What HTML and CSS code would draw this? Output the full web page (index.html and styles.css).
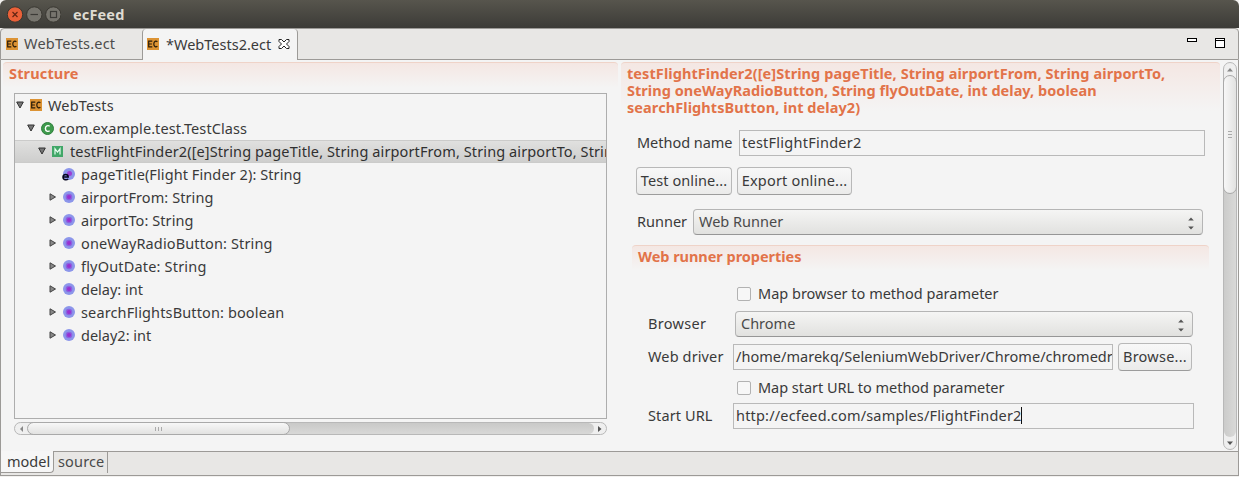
FILE: index.html
```html
<!DOCTYPE html>
<html lang="en">
<head>
<meta charset="utf-8">
<title>ecFeed</title>
<link rel="stylesheet" href="styles.css">
</head>
<body>
<svg width="0" height="0" class="defs">
  <symbol id="ec" viewBox="0 0 12 12"><rect width="12" height="12" fill="#dc9334"/><path d="M5.3 3.1H1.7V8.9H5.3M1.700 6H4.900M10.400 3.700C9 2.700 6.800 3 6.800 6S9 9.300 10.400 8.300" fill="none" stroke="#2a1c08" stroke-width="1.200"/></symbol>
  <symbol id="down" viewBox="0 0 8 8"><path d="M.7 1H7.300L4 7Z" fill="#777" stroke="#333"/></symbol>
  <symbol id="right" viewBox="0 0 8 8"><path d="M1 .8V7.200L6.500 4Z" fill="#888" stroke="#444"/></symbol>
  <symbol id="param" viewBox="0 0 12 12"><circle cx="6" cy="6" r="6" fill="#8c96ea"/><circle cx="6" cy="6" r="3.300" fill="#8c62e0"/><circle cx="6" cy="6" r="2" fill="#9b2fd0"/></symbol>
  <symbol id="updown" viewBox="0 0 8 14"><path d="M1.200 4.500H6.800L4 1.500ZM1.200 10.500H6.800L4 13.500Z" fill="#555"/></symbol>
</svg>
<div class="window">
  <header class="titlebar">
    <svg class="controls" width="54" height="18" viewBox="0 0 54 18">
      <circle cx="8" cy="8.500" r="7.700" fill="#ea6038" stroke="#393731"/><path d="M5.500 6L10.500 11M10.500 6L5.500 11" stroke="#642513" stroke-width="1.200"/>
      <circle cx="27.300" cy="8.500" r="7.700" fill="#77756e" stroke="#393731"/><path d="M23.500 8.500H31" stroke="#3c3b37" stroke-width="1.200"/>
      <circle cx="46.300" cy="8.500" r="7.700" fill="#77756e" stroke="#393731"/><rect x="43.500" y="5.500" width="6" height="6" fill="none" stroke="#3c3b37" stroke-width="1.200"/>
    </svg>
    <span class="ls15">ecFeed</span>
  </header>

  <nav class="tabs">
    <div class="tab"><svg class="i12"><use href="#ec"/></svg><span class="ls20">WebTests.ect</span></div>
    <div class="tab active"><svg class="i12"><use href="#ec"/></svg><span>*WebTests2.ect</span>
      <svg class="close" width="12" height="12" viewBox="0 0 12 12"><path d="M1 1.500H3.500L6 4L8.500 1.500H11V3.500L8.500 6L11 8.500V10.500H8.500L6 8L3.500 10.500H1V8.500L3.500 6L1 3.500Z" fill="#fff" stroke="#222"/></svg>
    </div>
    <div class="viewbtns">
      <svg width="10" height="4" viewBox="0 0 10 4"><rect x=".5" y=".5" width="9" height="3" fill="#fff" stroke="#000"/></svg>
      <svg width="10" height="10" viewBox="0 0 10 10"><rect x=".5" y=".5" width="9" height="9" fill="#fff" stroke="#000"/><path d="M1 2.500H9" stroke="#000"/></svg>
    </div>
  </nav>

  <main class="editor">
    <section class="structure">
      <h2 class="head ls15">Structure</h2>
      <div class="tree">
        <div class="row d0"><svg class="i8"><use href="#down"/></svg><svg class="i12"><use href="#ec"/></svg><span class="ls15">WebTests</span></div>
        <div class="row d1"><svg class="i8"><use href="#down"/></svg><svg class="i13" viewBox="0 0 13 13"><circle cx="6.500" cy="6.500" r="6" fill="#3e9a4c" stroke="#2f7f3d"/><path d="M8.700 4.200C7 3 4.400 3.800 4.400 6.500S7 10 8.700 8.800" fill="none" stroke="#fff" stroke-width="1.400"/></svg><span class="ls08">com.example.test.TestClass</span></div>
        <div class="row d2 selected"><svg class="i8"><use href="#down"/></svg><svg class="i11" viewBox="0 0 11 11"><rect width="11" height="11" fill="#41a768"/><path d="M3 8.500V2.800L5.500 6L8 2.800V8.500" fill="none" stroke="#e8fff0" stroke-width="1.200"/></svg><span class="ls11 clip">testFlightFinder2([e]String pageTitle, String airportFrom, String airportTo, String</span></div>
        <div class="row d3"><i class="i8"></i><svg class="i12 linked" viewBox="0 0 12 12"><circle cx="6" cy="6" r="6" fill="#8c96ea"/><circle cx="6.500" cy="5.500" r="2.500" fill="#9b3fd4"/><path d="M0 9H5.200C5.200 5.800 0 5.700 0 9C0 12.400 3.800 12.300 5.200 11" fill="none" stroke="#05051e" stroke-width="1.500"/></svg><span class="ls09">pageTitle(Flight Finder 2): String</span></div>
        <div class="row d3"><svg class="i8"><use href="#right"/></svg><svg class="i12"><use href="#param"/></svg><span class="ls09">airportFrom: String</span></div>
        <div class="row d3"><svg class="i8"><use href="#right"/></svg><svg class="i12"><use href="#param"/></svg><span class="ls09">airportTo: String</span></div>
        <div class="row d3"><svg class="i8"><use href="#right"/></svg><svg class="i12"><use href="#param"/></svg><span class="ls13">oneWayRadioButton: String</span></div>
        <div class="row d3"><svg class="i8"><use href="#right"/></svg><svg class="i12"><use href="#param"/></svg><span class="ls18">flyOutDate: String</span></div>
        <div class="row d3"><svg class="i8"><use href="#right"/></svg><svg class="i12"><use href="#param"/></svg><span>delay: int</span></div>
        <div class="row d3"><svg class="i8"><use href="#right"/></svg><svg class="i12"><use href="#param"/></svg><span class="ls13">searchFlightsButton: boolean</span></div>
        <div class="row d3"><svg class="i8"><use href="#right"/></svg><svg class="i12"><use href="#param"/></svg><span>delay2: int</span></div>
      </div>
      <div class="hscroll">
        <svg width="12" height="12" viewBox="0 0 12 12"><path d="M8 3V9L5 6Z" fill="#888"/></svg>
        <div class="hthumb"><i></i><i></i><i></i></div>
        <div class="htrack"></div>
        <svg width="12" height="12" viewBox="0 0 12 12"><path d="M4 3V9L7.500 6Z" fill="#555"/></svg>
      </div>
    </section>

    <section class="details">
      <h2 class="head method"><span class="ls08">testFlightFinder2([e]String pageTitle, String airportFrom, String airportTo,</span><br><span class="ls03">String oneWayRadioButton, String flyOutDate, int delay, boolean</span><br><span class="ls08">searchFlightsButton, int delay2)</span></h2>
      <div class="line name"><label class="tight">Method name</label><div class="field ls25">testFlightFinder2</div></div>
      <div class="line actions"><button>Test online...</button><button>Export online...</button></div>
      <div class="line runner"><label>Runner</label><div class="combo"><span>Web Runner</span><svg width="8" height="14"><use href="#updown"/></svg></div></div>
      <h3 class="head sub">Web runner properties</h3>
      <div class="line check"><i class="box"></i><span>Map browser to method parameter</span></div>
      <div class="line browser"><label class="ls30">Browser</label><div class="combo"><span>Chrome</span><svg width="8" height="14"><use href="#updown"/></svg></div></div>
      <div class="line driver"><label class="ls13">Web driver</label><div class="field"><span class="ls03">/home/marekq/SeleniumWebDriver/Chrome/chromedr</span></div><button>Browse...</button></div>
      <div class="line check second"><i class="box"></i><span class="tight">Map start URL to method parameter</span></div>
      <div class="line url"><label class="ls11">Start URL</label><div class="field ls18">http://ecfeed.com/samples/FlightFinder2<i class="caret"></i></div></div>
    </section>

    <div class="vscroll">
      <svg width="12" height="12" viewBox="0 0 12 12"><path d="M3 8.500H9L6 5Z" fill="#888"/></svg>
      <div class="vthumb"><i></i><i></i><i></i></div>
      <div class="vtrack"></div>
      <svg width="12" height="12" viewBox="0 0 12 12"><path d="M3 4.500H9L6 8Z" fill="#555"/></svg>
    </div>
  </main>

  <footer class="pages"><div class="page active">model</div><div class="page ls15">source</div></footer>
</div>
</body>
</html>
```
FILE: styles.css
```css
* { box-sizing: border-box; }
body { margin: 0; background: #f2f1ef; font: 14.5px/17px "Noto Sans", sans-serif; color: #3a3a3a; overflow: hidden; }
.defs { position: absolute; }
svg { display: block; flex: none; }
h2, h3 { margin: 0; font-size: 14.5px; line-height: 17px; }
.window { width: 1239px; height: 477px; display: flex; flex-direction: column; }

.ls03 { letter-spacing: .03px; }
.ls08 { letter-spacing: .08px; }
.ls09 { letter-spacing: .09px; }
.ls11 { letter-spacing: .11px; }
.ls13 { letter-spacing: .13px; }
.ls15 { letter-spacing: .15px; }
.ls18 { letter-spacing: .18px; }
.ls20 { letter-spacing: .2px; }
.ls25 { letter-spacing: .25px; }
.ls30 { letter-spacing: .32px; }
.tight { letter-spacing: -.03px; }

.i8 { width: 8px; height: 8px; flex: none; }
.i11 { width: 11px; height: 11px; }
.i12 { width: 12px; height: 12px; }
.i13 { width: 13px; height: 13px; }

.titlebar { height: 28px; flex: none; display: flex; align-items: center; gap: 12px; padding: 1px 0 0 7px; border-radius: 6px 6px 0 0; background: linear-gradient(#57554d, #3c3b37); color: #dfdbd2; font-weight: bold; }

.tabs { height: 32px; flex: none; display: flex; border: 1px solid #9c9a97; border-radius: 4px 4px 0 0; background: #e8e7e5; }
.tab { width: 141px; display: flex; align-items: center; padding: 0 0 1px 5px; gap: 6px; color: #4c4c4c; white-space: nowrap; }
.tab.active { width: 156px; height: 31px; background: #f4f4f4; border: solid #9c9a97; border-width: 0 1px; border-radius: 4px 4px 0 0; padding-left: 4px; gap: 7px; color: #3a3a3a; }
.tab.active .close { margin-left: 0; }
.viewbtns { margin-left: auto; display: flex; gap: 18px; padding: 9px 13px 0 0; }

.editor { flex: none; height: 391px; display: flex; background: #f4f4f4; border: solid #9c9a97; border-width: 0 1px; }
.head { color: #e27349; border-top: 1px solid #efd3c8; border-radius: 4px 4px 0 0; background: linear-gradient(#f4e7e3, #f4f4f4); white-space: nowrap; }

.structure { width: 620px; flex: none; padding: 2px 0 0 2px; }
.structure .head { width: 615px; height: 26px; padding: 2px 0 0 6px; }
.tree { width: 593px; height: 326px; margin: 5px 0 0 11px; border: 1px solid #adadad; overflow: hidden; }
.row { height: 23px; display: flex; align-items: center; white-space: nowrap; }
.row span { padding-bottom: 1px; }
.row .i8 { margin-bottom: 1px; }
.row .clip { flex: 1; min-width: 0; overflow: hidden; }
.d0 { padding-left: 1px; }
.d0 .i12 { margin: 0 6px 1px 6px; }
.d1 { padding-left: 12px; }
.d1 .i13 { margin: 0 5px 1px 6px; }
.d2 { padding-left: 23px; }
.d2 .i11 { margin: 0 7px 1px 6px; }
.d3 { padding-left: 34px; }
.d3 .i12 { margin: 0 6px 1px 6px; }
.linked { overflow: visible; }
.selected { background: linear-gradient(#e0e0df, #cececd); border: solid #cbcbca; border-width: 1px 0; color: #303030; }
.hscroll { width: 593px; height: 13px; margin: 3px 0 0 11px; display: flex; align-items: center; border: 1px solid #b8b8b8; border-radius: 7px; background: #efefef; }
.hthumb { width: 263px; height: 13px; flex: none; display: flex; gap: 2px; align-items: center; justify-content: center; border: 1px solid #a9a9a9; border-radius: 7px; background: linear-gradient(#f7f7f7, #e2e2e1); position: relative; z-index: 1; }
.hthumb i { width: 1px; height: 4px; background: #aaa; }
.htrack { flex: 1; height: 11px; margin-left: -6px; background: linear-gradient(#c9c9c8, #d8d8d7); border-radius: 0 6px 6px 0; }

.details { width: 602px; flex: none; padding-top: 2px; }
.method { width: 599px; height: 49px; padding: 2px 0 0 6px; }
.line { display: flex; align-items: center; white-space: nowrap; }
.line label, .check span { padding-bottom: 1px; }
.field { height: 26px; flex: none; display: flex; align-items: center; border: 1px solid #b9b9b9; padding: 0 0 1px 2px; overflow: hidden; background: #f4f4f4; }
.combo { height: 26px; flex: none; display: flex; align-items: center; justify-content: space-between; padding: 0 7px 1px 5px; border: 1px solid #b5b5b5; border-bottom-color: #969696; border-radius: 4px; background: linear-gradient(#f5f5f4, #e1e1df); color: #4a4a4a; }
.combo svg { margin-top: 3px; }
button { height: 28px; flex: none; padding: 0 0 1px; font: inherit; line-height: 17px; color: #3a3a3a; border: 1px solid #b8b8b8; border-bottom-color: #9c9c9c; border-radius: 4px; background: linear-gradient(#f8f8f8, #ebebea); }
.name { margin: 19px 0 0 16px; }
.name label { width: 102px; }
.name .field { width: 466px; }
.actions { gap: 5px; margin: 11px 0 0 15px; }
.actions button:first-child { width: 96px; letter-spacing: .09px; }
.actions button:last-child { width: 115px; letter-spacing: .2px; }
.runner { margin: 14px 0 0 16px; }
.runner label { width: 56px; }
.runner .combo { width: 510px; }
.sub { width: 577px; height: 25px; margin: 10px 0 0 11px; padding: 2px 0 0 6px; letter-spacing: -.04px; }
.check { height: 15px; margin: 16px 0 0 116px; gap: 7px; }
.box { width: 14px; height: 14px; border: 1px solid #b2b2b2; border-radius: 2px; background: #f7f7f7; }
.browser { margin: 10px 0 0 27px; }
.browser label { width: 87px; }
.browser .combo { width: 458px; }
.driver { margin: 6px 0 0 27px; }
.driver label { width: 85px; }
.driver .field { width: 380px; }
.driver button { width: 74px; margin-left: 5px; letter-spacing: .25px; }
.second { margin-top: 9px; }
.url { margin: 8px 0 0 27px; }
.url label { width: 85px; }
.url .field { width: 461px; }
.caret { width: 1px; height: 17px; margin-left: -1px; background: #111; }

.vscroll { width: 14px; margin: 2px 0 1px 0; display: flex; flex-direction: column; align-items: center; border: 1px solid #b8b8b8; border-radius: 7px; background: #efefef; }
.vthumb { width: 14px; height: 119px; flex: none; display: flex; flex-direction: column; gap: 2px; align-items: center; justify-content: center; border: 1px solid #a9a9a9; border-radius: 7px; background: linear-gradient(90deg, #f7f7f7, #e2e2e1); position: relative; z-index: 1; }
.vthumb i { width: 4px; height: 1px; background: #aaa; }
.vtrack { width: 12px; flex: 1; margin-top: -6px; background: linear-gradient(90deg, #cbcbca, #d9d9d8); border-radius: 0 0 6px 6px; }

.pages { height: 25px; flex: none; display: flex; border: 1px solid #9c9a97; background: #e8e7e5; }
.page { width: 54px; height: 21px; padding: 1px 0 0 4px; border-right: 1px solid #9c9a97; color: #4a4a4a; }
.page.active { width: 53px; height: 22px; margin-top: -1px; padding: 2px 0 0 6px; background: #f6f6f6; border: solid #9c9a97; border-width: 0 1px 1px 0; border-radius: 0 0 4px 0; color: #3a3a3a; }
```
